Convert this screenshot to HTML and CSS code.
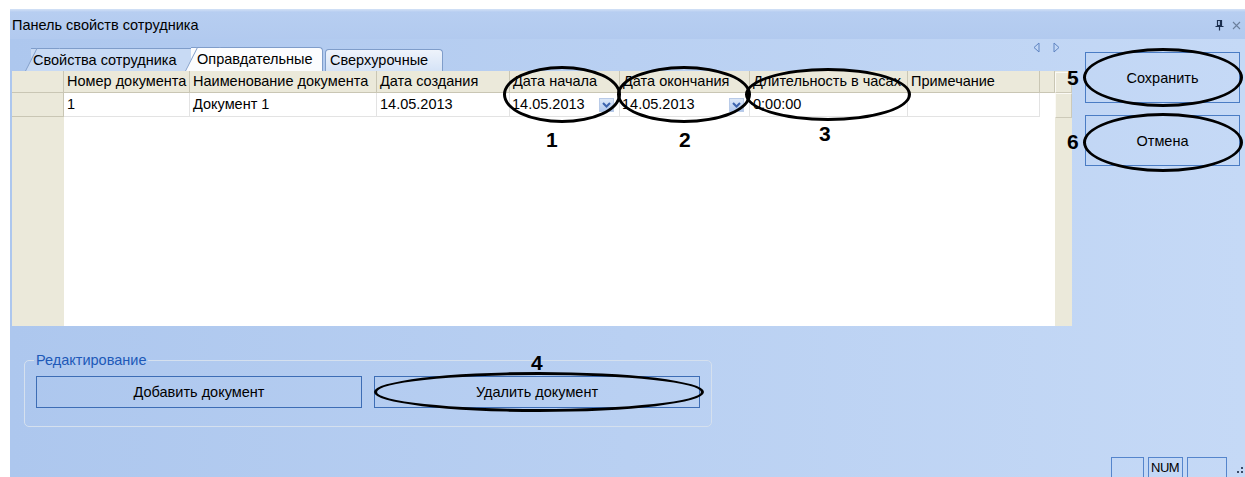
FILE: index.html
```html
<!DOCTYPE html>
<html lang="ru">
<head>
    <meta charset="UTF-8">
    <title>Панель свойств сотрудника</title>
    <link rel="stylesheet" href="styles.css">
</head>
<body>
<div class="page">
    <div class="panel">
        <div class="titlebar">
            <span>Панель свойств сотрудника</span>
            <span class="title-icons">
                <svg width="9" height="11" viewBox="0 0 9 11"><path d="M2.5 0.5h4v5h-4z M0.5 6.5h8 M4.5 6.5v4" fill="none" stroke="#1c2f4f" stroke-width="1.2"/><path d="M5.5 1v4.5" stroke="#1c2f4f" stroke-width="1.4"/></svg>
                <svg width="9" height="9" viewBox="0 0 9 9"><path d="M1 1l7 7M8 1l-7 7" stroke="#6b7f9d" stroke-width="1.1"/></svg>
            </span>
        </div>
        <div class="main">
            <div class="leftcol">
                <div class="tabstrip">
                    <div class="tabs">
                        <div class="tab tab-first">Свойства сотрудника</div>
                        <div class="tab tab-active">Оправдательные</div>
                        <div class="tab tab-last">Сверхурочные</div>
                    </div>
                    <div class="tabnav">
                        <svg width="7" height="11" viewBox="0 0 7 11"><path d="M6 1v9L1 5.5z" fill="none" stroke="#5f84c2"/></svg>
                        <svg width="7" height="11" viewBox="0 0 7 11"><path d="M1 1v9l5-4.5z" fill="none" stroke="#5f84c2"/></svg>
                    </div>
                </div>
                <div class="grid">
                    <div class="hsel"></div>
                    <div class="hcell">Номер документа</div>
                    <div class="hcell">Наименование документа</div>
                    <div class="hcell">Дата создания</div>
                    <div class="hcell">Дата начала</div>
                    <div class="hcell">Дата окончания</div>
                    <div class="hcell">Длительность в часах</div>
                    <div class="hcell">Примечание</div>
                    <div class="hfill"></div>
                    <div class="vscroll">
                        <div class="sbtn sbtn-top"></div>
                        <div class="sbtn sbtn-second"></div>
                    </div>

                    <div class="rsel"></div>
                    <div class="cell">1</div>
                    <div class="cell">Документ 1</div>
                    <div class="cell">14.05.2013</div>
                    <div class="cell combo">14.05.2013<span class="dd"><svg width="9" height="6" viewBox="0 0 9 6"><path d="M1 1l3.5 3.5L8 1" fill="none" stroke="#3c63ad" stroke-width="2"/></svg></span></div>
                    <div class="cell combo">14.05.2013<span class="dd"><svg width="9" height="6" viewBox="0 0 9 6"><path d="M1 1l3.5 3.5L8 1" fill="none" stroke="#3c63ad" stroke-width="2"/></svg></span></div>
                    <div class="cell">0:00:00</div>
                    <div class="cell"></div>
                    <div class="dfill"></div>

                    <div class="selfill"></div>
                </div>
            </div>
            <div class="sidebtns">
                <button class="sidebtn">Сохранить</button>
                <button class="sidebtn">Отмена</button>
            </div>
        </div>
        <div class="bottom">
            <fieldset class="group">
                <legend>Редактирование</legend>
                <div class="group-btns">
                    <button class="gbtn">Добавить документ</button>
                    <button class="gbtn">Удалить документ</button>
                </div>
            </fieldset>
            <div class="statusbar">
                <span class="sbox w1"></span>
                <span class="sbox w2">NUM</span>
                <span class="sbox w3"></span>
                <svg class="grip" width="6" height="8" viewBox="0 0 6 8"><rect x="4" y="1" width="2" height="2" fill="#3a4a66"/><rect x="4" y="5" width="2" height="2" fill="#3a4a66"/><rect x="0" y="5" width="2" height="2" fill="#3a4a66"/></svg>
            </div>
        </div>
    </div>

    <!-- annotation marks drawn over the screenshot -->
    <div class="marks">
        <div class="ring r1"></div>
        <div class="ring r2"></div>
        <div class="ring r3"></div>
        <div class="ring r4"></div>
        <div class="ring r5"></div>
        <div class="ring r6"></div>
        <span class="num n1">1</span>
        <span class="num n2">2</span>
        <span class="num n3">3</span>
        <span class="num n4">4</span>
        <span class="num n5">5</span>
        <span class="num n6">6</span>
    </div>
</div>
</body>
</html>
```

FILE: styles.css
```css
* {
    box-sizing: border-box;
}
body {
    margin: 0;
    background: #fff;
    font-family: "Liberation Sans", Arial, sans-serif;
    font-size: 14.5px;
    color: #000;
    overflow: hidden;
}
.page {
    position: relative;
    width: 1245px;
    height: 477px;
    padding: 9px 0 0 10px;
}
.panel {
    width: 1235px;
    height: 468px;
    display: flex;
    flex-direction: column;
    background: linear-gradient(to right, #adc7ee, #c5d9f6);
}
.titlebar {
    height: 30px;
    flex: none;
    display: flex;
    align-items: center;
    justify-content: space-between;
    padding: 2px 4px 0 2px;
    background: linear-gradient(to bottom, #d3e1f6 0, #b7cef1 3px, #b2caef 100%);
}
.title-icons {
    display: flex;
    align-items: center;
    gap: 8px;
}

/* main row: tabs + grid on the left, buttons on the right */
.main {
    display: flex;
    height: 287px;
    flex: none;
}
.leftcol {
    width: 1062px;
    padding-left: 2px;
    display: flex;
    flex-direction: column;
}
.tabstrip {
    height: 32px;
    display: flex;
    justify-content: space-between;
}
.tabs {
    display: flex;
    align-items: flex-end;
    padding-left: 19px;
}
.tab {
    position: relative;
    z-index: 1;
    height: 23px;
    line-height: 22px;
    white-space: nowrap;
    border-top: 1px solid #7f9dca;
    border-right: 1px solid #7f9dca;
    border-radius: 0 4px 0 0;
    background: #c8daf4;
}
.tab::before {
    content: "";
    position: absolute;
    z-index: -1;
    left: -6px;
    top: -1px;
    bottom: 0;
    width: 22px;
    background: inherit;
    border-left: 1px solid #7f9dca;
    border-top: 1px solid #7f9dca;
    transform: skewX(-27deg);
    transform-origin: 0 100%;
}
.tab-first {
    width: 165px;
    padding-left: 2px;
}
.tab-active {
    z-index: 2;
    width: 132px;
    height: 24px;
    margin-left: -5px;
    padding-left: 6px;
    background: #fbfcfe;
}
.tab-last {
    z-index: 0;
    width: 118px;
    height: 22px;
    line-height: 20px;
    margin-left: 2px;
    padding-left: 4px;
    border-left: 1px solid #7f9dca;
    border-radius: 4px 4px 0 0;
    background: linear-gradient(to bottom, #eef3fb, #d5e3f7);
}
.tab-last::before {
    display: none;
}
.tabnav {
    display: flex;
    gap: 13px;
    padding: 3px 12px 0 0;
}

/* data grid */
.grid {
    display: grid;
    grid-template-columns: 52px 126px 187px 133px 110px 130px 158px 132px 15px 17px;
    grid-template-rows: 22px 24px 1fr;
    height: 255px;
    background: #fff;
}
.hsel, .hfill {
    background: #ebe9da;
    border-right: 1px solid #c9c6b4;
    border-bottom: 1px solid #c9c6b4;
}
.hcell {
    background: #ebe9da;
    border-right: 1px solid #c9c6b4;
    border-bottom: 1px solid #c9c6b4;
    padding-left: 3px;
    line-height: 21px;
    white-space: nowrap;
    overflow: hidden;
}
.rsel {
    background: #ebe9da;
    border-right: 1px solid #c9c6b4;
    border-bottom: 1px solid #c9c6b4;
}
.selfill {
    grid-column: 1;
    background: #ebe9da;
}
.cell {
    border-right: 1px solid #e3e3e3;
    border-bottom: 1px solid #e3e3e3;
    padding-left: 3px;
    line-height: 23px;
    white-space: nowrap;
    overflow: hidden;
}
.combo {
    display: flex;
    align-items: center;
    justify-content: space-between;
    padding-left: 2px;
    padding-right: 5px;
}
.dd {
    width: 15px;
    height: 14px;
    display: flex;
    align-items: center;
    justify-content: center;
    background: linear-gradient(to bottom, #dde8f8, #b0c7ed);
    border: 1px solid #b9cbe8;
}
.vscroll {
    grid-column: 10;
    grid-row: 1 / 4;
    background: #ebe9da;
    padding-top: 1px;
}
.sbtn {
    border: 1px solid #cdcab9;
    border-top-color: #fbfaf5;
    border-left-color: #fbfaf5;
}
.sbtn-top {
    height: 21px;
}
.sbtn-second {
    height: 25px;
}

.sidebtns {
    width: 173px;
    padding: 13px 0 0 13px;
    display: flex;
    flex-direction: column;
    gap: 12px;
}
.sidebtn {
    width: 155px;
    height: 51px;
    border: 1px solid #4a7cc4;
    background: transparent;
    font: inherit;
    color: #000;
    padding: 0;
}

/* editing group + status bar */
.bottom {
    flex: 1;
    display: flex;
    flex-direction: column;
    padding-top: 25px;
}
.group {
    width: 688px;
    min-width: 0;
    margin: 0 0 0 14px;
    padding: 7px 11px 18px 11px;
    border: 1px solid #d5e0ee;
    border-radius: 5px;
}
.group legend {
    padding: 0 2px;
    margin-left: -2px;
    line-height: 18px;
    color: #2059b8;
}
.group-btns {
    display: flex;
    gap: 12px;
}
.gbtn {
    width: 326px;
    height: 32px;
    border: 1px solid #3d6db5;
    background: transparent;
    font: inherit;
    color: #000;
    padding: 0;
}
.statusbar {
    margin-top: auto;
    height: 20px;
    display: flex;
    justify-content: flex-end;
    align-items: stretch;
    gap: 4px;
    padding-right: 2px;
}
.sbox {
    border: 1px solid #5585cc;
    border-bottom: none;
    font-size: 13px;
    line-height: 19px;
    padding-left: 2px;
    letter-spacing: -0.5px;
}
.w1 { width: 33px; }
.w2 { width: 35px; }
.w3 { width: 40px; }
.grip {
    align-self: center;
    margin: 6px 0 0 6px;
}

/* hand-drawn annotation rings and numbers */
.marks {
    position: absolute;
    left: 0;
    top: 0;
}
.ring {
    position: absolute;
    border: 3px solid #000;
    border-radius: 50%;
}
.r1 { left: 503px; top: 66px; width: 118px; height: 57px; }
.r2 { left: 617px; top: 66px; width: 134px; height: 57px; }
.r3 { left: 745px; top: 68px; width: 166px; height: 53px; }
.r4 { left: 374px; top: 372px; width: 330px; height: 40px; }
.r5 { left: 1083px; top: 48px; width: 160px; height: 59px; }
.r6 { left: 1083px; top: 113px; width: 160px; height: 59px; }
.num {
    position: absolute;
    font-weight: bold;
    font-size: 21px;
    line-height: 21px;
}
.n1 { left: 546px; top: 129px; }
.n2 { left: 679px; top: 129px; }
.n3 { left: 819px; top: 123px; }
.n4 { left: 531px; top: 352px; }
.n5 { left: 1067px; top: 67px; }
.n6 { left: 1067px; top: 131px; }
```
